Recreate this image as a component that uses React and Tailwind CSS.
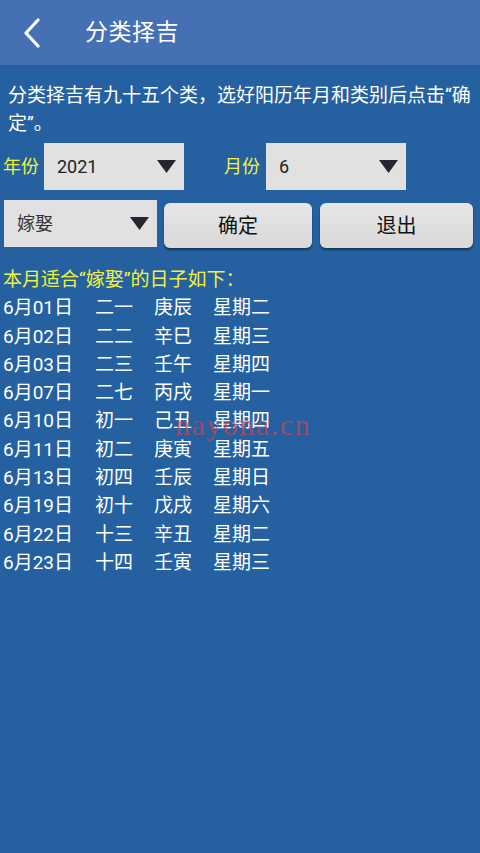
import React from "react";

const rows = [
  ["6月01日", "二一", "庚辰", "星期二"],
  ["6月02日", "二二", "辛巳", "星期三"],
  ["6月03日", "二三", "壬午", "星期四"],
  ["6月07日", "二七", "丙戌", "星期一"],
  ["6月10日", "初一", "己丑", "星期四"],
  ["6月11日", "初二", "庚寅", "星期五"],
  ["6月13日", "初四", "壬辰", "星期日"],
  ["6月19日", "初十", "戊戌", "星期六"],
  ["6月22日", "十三", "辛丑", "星期二"],
  ["6月23日", "十四", "壬寅", "星期三"],
];

const font = { fontFamily: 'Roboto, "Noto Sans CJK SC", sans-serif' };

function Tri() {
  return (
    <svg width="19" height="14" viewBox="0 0 19 14" className="shrink-0">
      <polygon points="0,0 19,0 9.5,13" fill="#262633" />
    </svg>
  );
}

export default function App() {
  return (
    <div
      className="relative w-[480px] h-[853px] bg-[#2561a0] overflow-hidden text-white"
      style={font}
    >
      <div className="h-[65px] bg-[#4570b3] flex items-center">
        <svg width="20" height="30" viewBox="0 0 20 30" className="ml-[22px]">
          <polyline
            points="16,2 4,15 16,28"
            fill="none"
            stroke="#ffffff"
            strokeWidth="3.2"
            strokeLinecap="round"
            strokeLinejoin="round"
          />
        </svg>
        <div className="ml-[43px] text-[23px] leading-none tracking-[0.5px]">分类择吉</div>
      </div>

      <div className="pt-[17px] pl-[8px] pr-[6px] text-[19px] leading-[28px]">
        分类择吉有九十五个类，选好阳历年月和类别后点击“确定”。
      </div>

      <div className="mt-[5px] flex items-center h-[47px]">
        <div className="ml-[3px] w-[41px] text-[18px] text-[#f2f23c]">年份</div>
        <div className="w-[140px] h-[47px] bg-[#e1e1e1] flex items-center justify-between pl-[13px] pr-[8px]">
          <span className="text-[18px] text-[#222]">2021</span>
          <Tri />
        </div>
        <div className="ml-[40px] w-[42px] text-[18px] text-[#f2f23c]">月份</div>
        <div className="w-[140px] h-[47px] bg-[#e1e1e1] flex items-center justify-between pl-[13px] pr-[8px]">
          <span className="text-[18px] text-[#222]">6</span>
          <Tri />
        </div>
      </div>

      <div className="mt-[10px] flex items-start">
        <div className="ml-[4px] w-[153px] h-[47px] bg-[#e1e1e1] flex items-center justify-between pl-[13px] pr-[8px]">
          <span className="text-[18px] text-[#333]">嫁娶</span>
          <Tri />
        </div>
        <div className="ml-[7px] mt-[3px] w-[148px] h-[45px] rounded-[6px] bg-gradient-to-b from-[#e6e6e6] to-[#d9d9d9] shadow-[0_2px_2px_rgba(0,0,0,0.45)] flex items-center justify-center text-[20px] text-[#111]">
          确定
        </div>
        <div className="ml-[8px] mt-[3px] w-[153px] h-[45px] rounded-[6px] bg-gradient-to-b from-[#e6e6e6] to-[#d9d9d9] shadow-[0_2px_2px_rgba(0,0,0,0.45)] flex items-center justify-center text-[20px] text-[#111]">
          退出
        </div>
      </div>

      <div className="mt-[18px] pl-[3px] text-[19px] leading-[28.3px]">
        <div className="text-[#f2f23c]">本月适合“嫁娶”的日子如下：</div>
        {rows.map((r, i) => (
          <div key={i} className="grid grid-cols-[92px_59px_59px_auto]">
            <span>{r[0]}</span>
            <span>{r[1]}</span>
            <span>{r[2]}</span>
            <span>{r[3]}</span>
          </div>
        ))}
      </div>

      <div
        className="absolute left-[175px] top-[410px] text-[30px] leading-none text-[#d0404c]/70 tracking-[1.5px]"
        style={{ fontFamily: '"Liberation Serif", serif' }}
      >
        nayona.cn
      </div>
    </div>
  );
}
